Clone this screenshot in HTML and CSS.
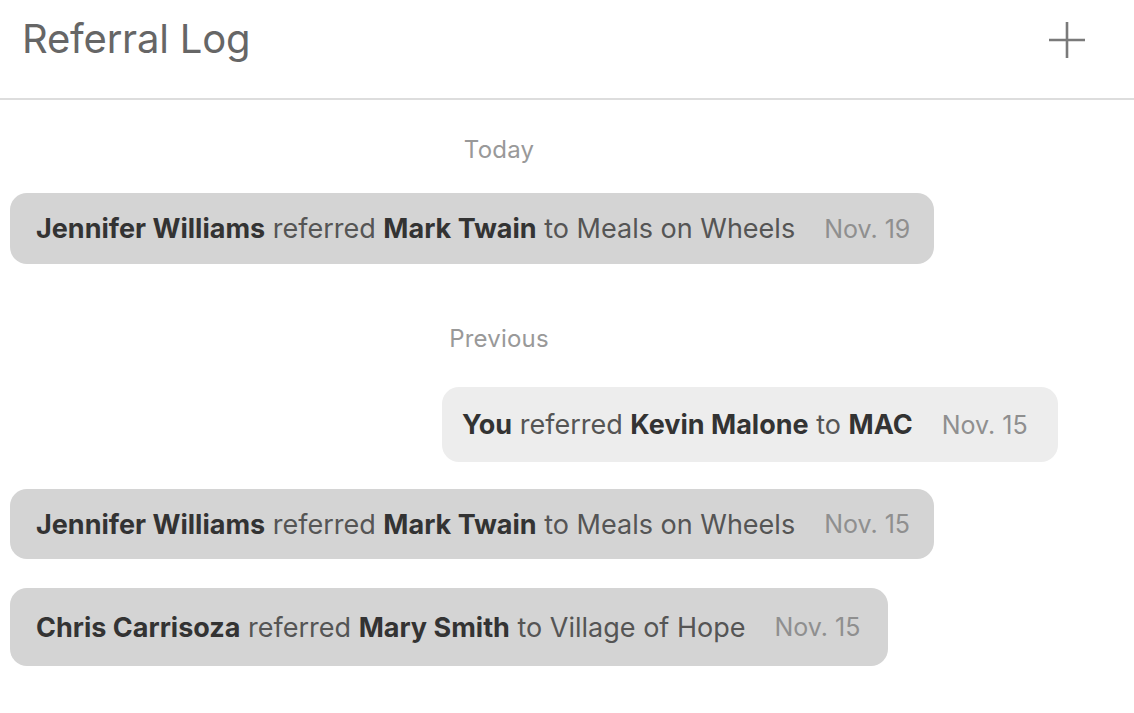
FILE: index.html
```html
<!DOCTYPE html>
<html lang="en">
<head>
<meta charset="utf-8">
<title>Referral Log</title>
<link rel="stylesheet" href="styles.css">
</head>
<body>
<div class="app">
  <header class="topbar">
    <h1 class="title">Referral Log</h1>
    <button class="add-btn" aria-label="Add referral">
      <svg width="38" height="38" viewBox="0 0 38 38"><path d="M19 1V37M1 19H37" stroke="#7a7a7a" stroke-width="2.6" fill="none"/></svg>
    </button>
  </header>
  <main class="log">
    <div class="day-label day-today">Today</div>
    <div class="row">
      <div class="bubble other b1">
        <span class="msg"><b>Jennifer Williams</b> referred <b>Mark Twain</b> to Meals on Wheels</span>
        <span class="date">Nov. 19</span>
      </div>
    </div>
    <div class="day-label day-prev">Previous</div>
    <div class="row mine-row">
      <div class="bubble mine b2">
        <span class="msg"><b>You</b> referred <b>Kevin Malone</b> to <b>MAC</b></span>
        <span class="date">Nov. 15</span>
      </div>
    </div>
    <div class="row">
      <div class="bubble other b3">
        <span class="msg"><b>Jennifer Williams</b> referred <b>Mark Twain</b> to Meals on Wheels</span>
        <span class="date">Nov. 15</span>
      </div>
    </div>
    <div class="row">
      <div class="bubble other b4">
        <span class="msg"><b>Chris Carrisoza</b> referred <b>Mary Smith</b> to Village of Hope</span>
        <span class="date">Nov. 15</span>
      </div>
    </div>
  </main>
</div>
</body>
</html>
```

FILE: styles.css
```css
* { box-sizing: border-box; }
html, body { margin: 0; padding: 0; background: #fff; }
body {
  font-family: Inter, "Helvetica Neue", Arial, sans-serif;
  color: #333;
  width: 1134px;
  height: 713px;
  overflow: hidden;
}
.topbar {
  height: 100px;
  display: flex;
  align-items: flex-start;
  justify-content: space-between;
  padding: 14px 48px 0 22px;
  border-bottom: 2px solid #dddddd;
}
.title {
  margin: 0;
  font-size: 40px;
  font-weight: 400;
  color: #666;
  letter-spacing: -0.2px;
  line-height: 50px;
}
.add-btn {
  border: 0;
  background: transparent;
  padding: 0;
  margin-top: 7px;
  display: flex;
}
.log {
  display: flex;
  flex-direction: column;
  padding: 0 0 0 10px;
}
.day-label {
  width: 978px;
  text-align: center;
  font-size: 24px;
  color: #999;
  line-height: 26px;
  letter-spacing: 0.2px;
}
.day-today { margin-top: 37px; }
.day-prev { margin-top: 62px; }
.row { display: flex; }
.mine-row { justify-content: flex-start; padding-left: 432px; }
.bubble {
  display: flex;
  align-items: center;
  gap: 29px;
  border-radius: 17px;
  padding: 0 20px 0 26px;
  font-size: 27px;
  letter-spacing: 0;
  white-space: nowrap;
}
.msg { color: #555; }
.msg b { font-weight: 700; color: #333; }
.date { color: #8f8f8f; font-size: 25px; }
.other { background: #d4d4d4; }
.mine { background: #ededed; }
.b1 { height: 71px; margin-top: 30px; width: 924px; }
.b2 { height: 75px; margin-top: 35px; width: 616px; padding-left: 20px; }
.b3 { height: 70px; margin-top: 27px; width: 924px; }
.b4 { height: 78px; margin-top: 29px; width: 878px; }
```
